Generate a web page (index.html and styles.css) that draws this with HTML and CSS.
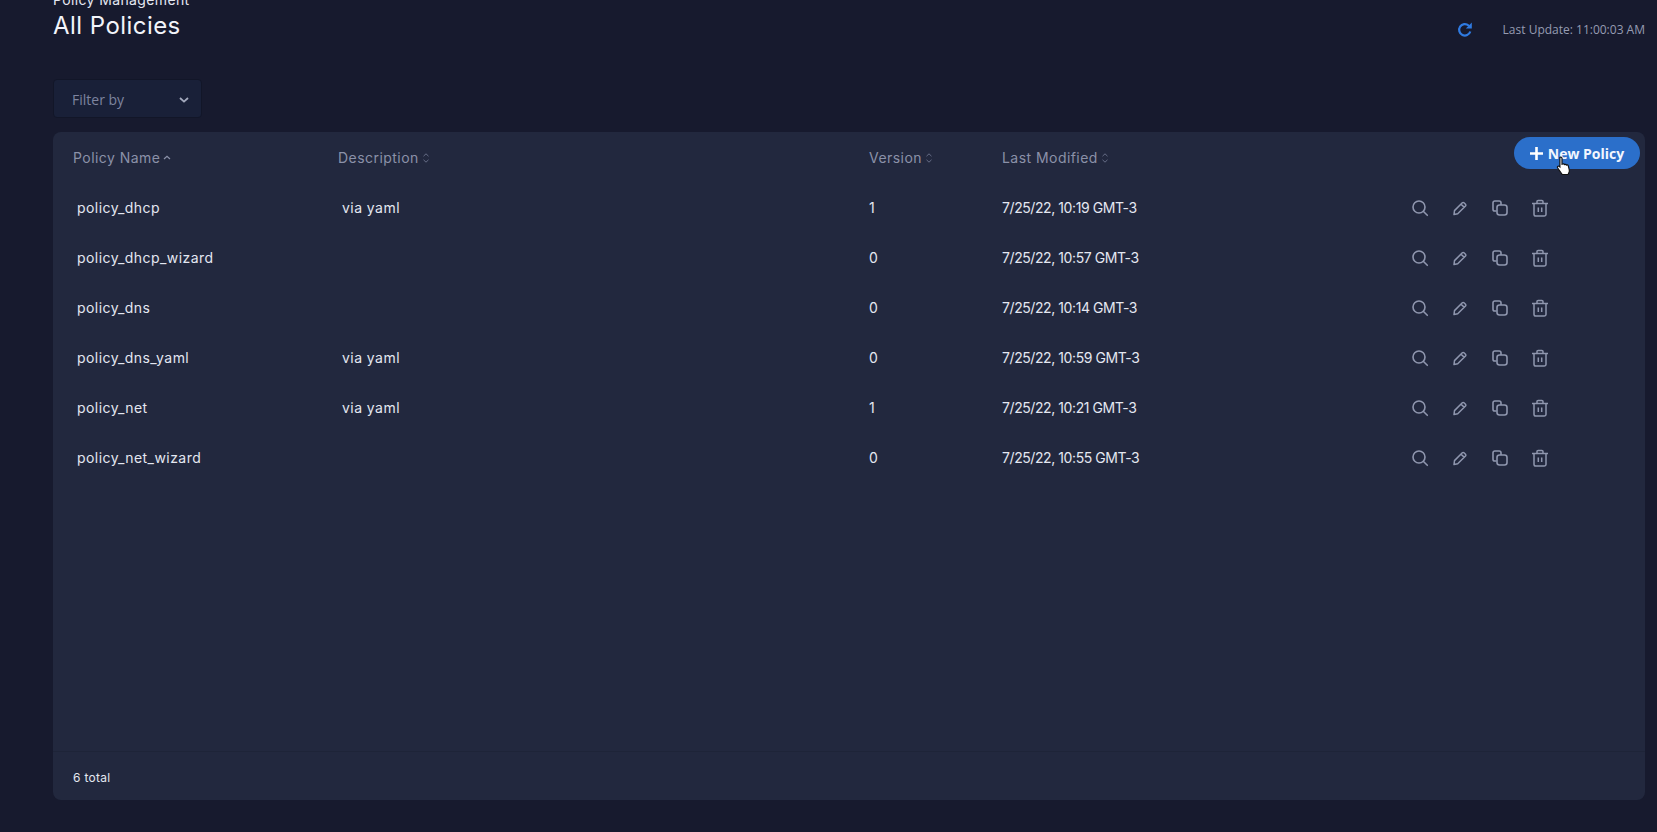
FILE: index.html
```html
<!DOCTYPE html>
<html lang="en">
<head>
<meta charset="utf-8">
<title>All Policies</title>
<link rel="stylesheet" href="styles.css">
</head>
<body>
<svg class="defs" width="0" height="0">
  <defs>
    <symbol id="i-sort" viewBox="0 0 8 12"><path d="M1.500 4.200 4 1.800l2.500 2.400M1.500 7.800 4 10.200l2.500-2.400" fill="none" stroke="currentColor" stroke-width="1"/></symbol>
    <symbol id="i-search" viewBox="0 0 18 18"><circle cx="8" cy="8" r="6" fill="none" stroke="currentColor" stroke-width="1.600"/><path d="m12.500 12.500 3.800 3.800" fill="none" stroke="currentColor" stroke-width="1.600" stroke-linecap="round"/></symbol>
    <symbol id="i-edit" viewBox="0 0 18 18"><path d="M3 15.500 3.500 11.600 11.300 3.800a1.200 1.200 0 0 1 1.700 0l1.500 1.500a1.200 1.200 0 0 1 0 1.700L6.700 14.800ZM10 5.100l3.200 3.200" fill="none" stroke="currentColor" stroke-width="1.500" stroke-linejoin="round"/></symbol>
    <symbol id="i-copy" viewBox="0 0 18 18"><path d="M5.500 12H3.800A1.800 1.800 0 0 1 2 10.200V3.800A1.800 1.800 0 0 1 3.800 2h4.400A1.800 1.800 0 0 1 10 3.800V6" fill="none" stroke="currentColor" stroke-width="1.600"/><rect x="6" y="6" width="10" height="10" rx="2.500" fill="none" stroke="currentColor" stroke-width="1.600"/></symbol>
    <symbol id="i-trash" viewBox="0 0 18 18"><path d="M1 4.500h16M3 4.500v10.700A1.800 1.800 0 0 0 4.800 17h8.400a1.800 1.800 0 0 0 1.800-1.800V4.500M6 4.500V2.600A1.100 1.100 0 0 1 7.100 1.500h3.800A1.100 1.100 0 0 1 12 2.600V4.500M7.300 8.500v4.500M10.700 8.500v4.500" fill="none" stroke="currentColor" stroke-width="1.500"/></symbol>
  </defs>
</svg>

<main class="page">
  <header class="top">
    <div class="titles">
      <div class="crumb">Policy Management</div>
      <h1 class="title">All Policies</h1>
    </div>
    <div class="update">
      <svg class="refresh" viewBox="0 0 16 16" width="16" height="16"><path d="M13.300 9.500A5.700 5.700 0 1 1 11.600 3.500L13.500 5" fill="none" stroke="#2f7ae0" stroke-width="2.200"/><path d="M14.800 0.500V6.500H8.800Z" fill="#2f7ae0"/></svg>
      <span class="update-text">Last Update: 11:00:03 AM</span>
    </div>
  </header>

  <div class="filter">
    <span>Filter by</span>
    <svg viewBox="0 0 10 6" width="10" height="6"><path d="m1 1 4 3.600L9 1" fill="none" stroke="#a3a9bd" stroke-width="1.800"/></svg>
  </div>

  <section class="panel">
    <button class="new-btn" type="button"><svg viewBox="0 0 12 12" width="13" height="13"><path d="M6 0v12M0 6h12" stroke="#fff" stroke-width="2.400"/></svg>New Policy</button>
    <svg class="cursor" viewBox="0 0 14 17" width="18" height="20"><path d="M3.500 1.200c.8-.6 1.800 0 1.800 1V7l.8-.2c.6-.2 1.100 0 1.300.5.600-.4 1.300-.2 1.600.4.600-.4 1.400-.1 1.600.5l.9 3.500c.2 1 0 2-.5 2.800l-.5 1.200H5.500L1.500 10c-.5-.8.500-1.800 1.400-1.200l.6.500Z" fill="#fff" stroke="#111" stroke-width="1"/></svg>

    <div class="table">
      <div class="row head">
        <div class="c-name">Policy Name<svg class="sort" width="8" height="12" viewBox="0 0 8 12"><path d="M1 7 4 4.200 7 7" fill="none" stroke="currentColor" stroke-width="1.200"/></svg></div>
        <div class="c-desc">Description<svg class="sort dim" width="8" height="12"><use href="#i-sort"/></svg></div>
        <div class="c-ver">Version<svg class="sort dim" width="8" height="12"><use href="#i-sort"/></svg></div>
        <div class="c-mod">Last Modified<svg class="sort dim" width="8" height="12"><use href="#i-sort"/></svg></div>
      </div>

      <div class="row body-row">
        <div class="c-name in">policy_dhcp</div><div class="c-desc in">via yaml</div><div class="c-ver">1</div><div class="c-mod date">7/25/22, 10:19 GMT-3</div>
        <div class="actions"><svg><use href="#i-search"/></svg><svg><use href="#i-edit"/></svg><svg><use href="#i-copy"/></svg><svg><use href="#i-trash"/></svg></div>
      </div>
      <div class="row body-row">
        <div class="c-name in">policy_dhcp_wizard</div><div class="c-desc in"></div><div class="c-ver">0</div><div class="c-mod date">7/25/22, 10:57 GMT-3</div>
        <div class="actions"><svg><use href="#i-search"/></svg><svg><use href="#i-edit"/></svg><svg><use href="#i-copy"/></svg><svg><use href="#i-trash"/></svg></div>
      </div>
      <div class="row body-row">
        <div class="c-name in">policy_dns</div><div class="c-desc in"></div><div class="c-ver">0</div><div class="c-mod date">7/25/22, 10:14 GMT-3</div>
        <div class="actions"><svg><use href="#i-search"/></svg><svg><use href="#i-edit"/></svg><svg><use href="#i-copy"/></svg><svg><use href="#i-trash"/></svg></div>
      </div>
      <div class="row body-row">
        <div class="c-name in">policy_dns_yaml</div><div class="c-desc in">via yaml</div><div class="c-ver">0</div><div class="c-mod date">7/25/22, 10:59 GMT-3</div>
        <div class="actions"><svg><use href="#i-search"/></svg><svg><use href="#i-edit"/></svg><svg><use href="#i-copy"/></svg><svg><use href="#i-trash"/></svg></div>
      </div>
      <div class="row body-row">
        <div class="c-name in">policy_net</div><div class="c-desc in">via yaml</div><div class="c-ver">1</div><div class="c-mod date">7/25/22, 10:21 GMT-3</div>
        <div class="actions"><svg><use href="#i-search"/></svg><svg><use href="#i-edit"/></svg><svg><use href="#i-copy"/></svg><svg><use href="#i-trash"/></svg></div>
      </div>
      <div class="row body-row">
        <div class="c-name in">policy_net_wizard</div><div class="c-desc in"></div><div class="c-ver">0</div><div class="c-mod date">7/25/22, 10:55 GMT-3</div>
        <div class="actions"><svg><use href="#i-search"/></svg><svg><use href="#i-edit"/></svg><svg><use href="#i-copy"/></svg><svg><use href="#i-trash"/></svg></div>
      </div>
    </div>

    <footer class="foot">6 total</footer>
  </section>
</main>
</body>
</html>
```

FILE: styles.css
```css
* { box-sizing: border-box; }
html, body { margin: 0; height: 100%; }
body {
  background: #171a2e;
  color: #e4e7f1;
  font-family: Inter, "Liberation Sans", sans-serif;
  overflow: hidden;
}
.defs { position: absolute; }
.page { height: 832px; padding-left: 53px; padding-right: 12px; display: flex; flex-direction: column; }

.top { display: flex; justify-content: space-between; align-items: flex-start; height: 79px; }
.titles { margin-top: -9px; }
.crumb { font-size: 14px; line-height: 17px; letter-spacing: 0.37px; color: #e4e7f1; }
.title { margin: 1px 0 0; font-size: 24px; line-height: 34px; font-weight: 400; letter-spacing: 0.45px; color: #f2f4fa; }
.update { display: flex; align-items: center; margin-top: 21px; }
.refresh { margin-right: 30px; }
.update-text { font-family: "Open Sans", sans-serif; font-size: 12px; line-height: 17px; color: #969cb2; }

.filter {
  width: 149px; height: 39px; flex: none;
  padding: 2px 12px 0 18px;
  display: flex; align-items: center; justify-content: space-between;
  background: #192038;
  border: 1px solid #121628;
  border-radius: 4px;
  font-family: "Open Sans", sans-serif;
  font-size: 14px;
  color: #7d849f;
}

.panel {
  position: relative;
  margin-top: 14px;
  height: 668px;
  background: #22283e;
  border-radius: 8px;
  display: flex; flex-direction: column;
}
.table { flex: 1; }
.row { display: grid; grid-template-columns: 265px 531px 133px 350px 1fr; padding-left: 20px; align-items: center; letter-spacing: 0.45px; }
.head { height: 50px; font-size: 14px; color: #8b91a8; }
.body-row { height: 50px; font-size: 14px; color: #e4e7f1; }
.in { padding-left: 4px; }
.date { letter-spacing: -0.42px; }
.sort { margin-left: 3px; vertical-align: -1px; }
.sort.dim { color: #666d86; }
.actions { display: flex; gap: 22px; color: #8f96ae; margin: 1px 0 0 59px; }
.actions svg { width: 18px; height: 18px; display: block; }

.new-btn {
  position: absolute; top: 5px; right: 5px;
  width: 126px; height: 32px;
  border: 0; border-radius: 16px;
  background: #2b6fca;
  color: #f2f6ff;
  font-family: "Open Sans", sans-serif;
  font-size: 14px; font-weight: 700;
  display: flex; align-items: center; justify-content: center; gap: 5px;
  padding: 0;
}
.cursor { position: absolute; top: 24px; right: 72px; z-index: 2; }

.foot {
  height: 49px;
  border-top: 1px solid #1e2438;
  padding: 2px 0 0 20px;
  display: flex; align-items: center;
  font-size: 12px;
  letter-spacing: 0.3px;
  color: #e4e7f1;
}
```
